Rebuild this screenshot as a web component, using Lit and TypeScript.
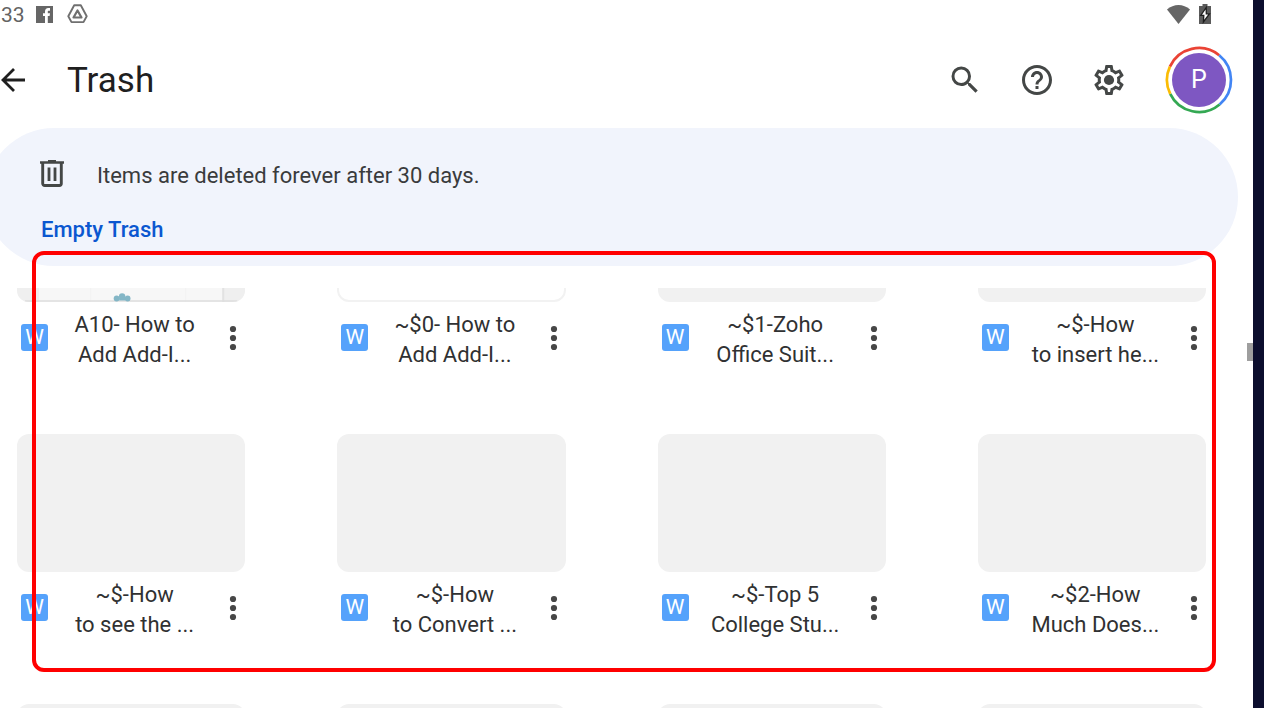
import { LitElement, html, css, svg } from "lit";
import { customElement, property } from "lit/decorators.js";

type Preview = "sheet" | "outline" | "plain";

interface TrashedFile {
  lines: string[];
  preview: Preview;
}

const FILES: TrashedFile[] = [
  { lines: ["A10- How to", "Add Add-I..."], preview: "sheet" },
  { lines: ["~$0- How to", "Add Add-I..."], preview: "outline" },
  { lines: ["~$1-Zoho", "Office Suit..."], preview: "plain" },
  { lines: ["~$-How", "to insert he..."], preview: "plain" },
  { lines: ["~$-How", "to see the ..."], preview: "plain" },
  { lines: ["~$-How", "to Convert ..."], preview: "plain" },
  { lines: ["~$-Top 5", "College Stu..."], preview: "plain" },
  { lines: ["~$2-How", "Much Does..."], preview: "plain" },
  { lines: [], preview: "plain" },
  { lines: [], preview: "plain" },
  { lines: [], preview: "plain" },
  { lines: [], preview: "plain" },
];

const SEARCH = svg`<path d="M15.5 14h-.79l-.28-.27A6.471 6.471 0 0 0 16 9.5 6.5 6.5 0 1 0 9.5 16c1.61 0 3.09-.59 4.23-1.57l.27.28v.79l5 4.99L20.49 19l-4.99-5zm-6 0C7.01 14 5 11.99 5 9.5S7.01 5 9.5 5 14 7.01 14 9.5 11.99 14 9.5 14z"/>`;
const HELP = svg`<path d="M11 18h2v-2h-2v2zm1-16C6.48 2 2 6.48 2 12s4.48 10 10 10 10-4.48 10-10S17.52 2 12 2zm0 18c-4.41 0-8-3.59-8-8s3.59-8 8-8 8 3.59 8 8-3.59 8-8 8zm0-14c-2.21 0-4 1.79-4 4h2c0-1.1.9-2 2-2s2 .9 2 2c0 2-3 1.75-3 5h2c0-2.25 3-2.5 3-5 0-2.21-1.79-4-4-4z"/>`;
const GEAR = svg`<path d="M19.43 12.98c.04-.32.07-.64.07-.98 0-.34-.03-.66-.07-.98l2.11-1.65c.19-.15.24-.42.12-.64l-2-3.46c-.09-.16-.26-.25-.44-.25-.06 0-.12.01-.17.03l-2.49 1c-.52-.4-1.08-.73-1.69-.98l-.38-2.65C14.46 2.18 14.25 2 14 2h-4c-.25 0-.46.18-.49.42l-.38 2.65c-.61.25-1.17.59-1.69.98l-2.49-1c-.06-.02-.12-.03-.18-.03-.17 0-.34.09-.43.25l-2 3.46c-.13.22-.07.49.12.64l2.11 1.65c-.04.32-.07.65-.07.98 0 .33.03.66.07.98l-2.11 1.65c-.19.15-.24.42-.12.64l2 3.46c.09.16.26.25.44.25.06 0 .12-.01.17-.03l2.49-1c.52.4 1.08.73 1.69.98l.38 2.65c.03.24.24.42.49.42h4c.25 0 .46-.18.49-.42l.38-2.65c.61-.25 1.17-.59 1.69-.98l2.49 1c.06.02.12.03.18.03.17 0 .34-.09.43-.25l2-3.46c.12-.22.07-.49-.12-.64l-2.11-1.65zm-1.98-1.71c.04.31.05.52.05.73 0 .21-.02.43-.05.73l-.14 1.13.89.7 1.08.84-.7 1.21-1.27-.51-1.04-.42-.9.68c-.43.32-.84.56-1.25.73l-1.06.43-.16 1.13-.2 1.35h-1.4l-.19-1.35-.16-1.13-1.06-.43c-.43-.18-.83-.41-1.23-.71l-.91-.7-1.06.43-1.27.51-.7-1.21 1.08-.84.89-.7-.14-1.13c-.03-.31-.05-.54-.05-.74s.02-.43.05-.73l.14-1.13-.89-.7-1.08-.84.7-1.21 1.27.51 1.04.42.9-.68c.43-.32.84-.56 1.25-.73l1.06-.43.16-1.13.2-1.35h1.39l.19 1.35.16 1.13 1.06.43c.43.18.83.41 1.23.71l.91.7 1.06-.43 1.27-.51.7 1.21-1.07.85-.89.7.14 1.13z"/><circle cx="12" cy="12" r="3.4"/>`;

@customElement("file-card")
class FileCard extends LitElement {
  @property({ attribute: false }) file!: TrashedFile;

  static styles = css`
    :host {
      display: block;
      min-width: 0;
    }
    .preview {
      height: 138px;
      border-radius: 12px;
      background: #f1f1f1;
      overflow: hidden;
      box-sizing: border-box;
    }
    .preview.outline {
      background: #fff;
      border: 2px solid #f2f2f2;
    }
    .preview svg {
      display: block;
      width: 100%;
      height: 100%;
    }
    .caption {
      display: flex;
      align-items: center;
      padding: 8px 0 0 4px;
      height: 60px;
    }
    .kind,
    .more {
      flex: none;
      margin-bottom: 5px;
    }
    .kind {
      width: 27px;
      height: 27px;
      border-radius: 3px;
      background: #55a2fb;
      color: #fff;
      font-size: 21px;
      line-height: 27px;
      text-align: center;
    }
    .name {
      flex: 1;
      text-align: center;
      font-size: 22px;
      line-height: 30px;
      color: #303132;
      white-space: nowrap;
    }
    .line {
      display: block;
    }
    .more {
      width: 24px;
      height: 36px;
      padding: 0;
      border: 0;
      background: none;
    }
    .more svg {
      display: block;
    }
  `;

  render() {
    const { lines, preview } = this.file;
    return html`
      <div class="preview ${preview}">${preview === "sheet" ? this.sheet() : ""}</div>
      ${lines.length
        ? html`<div class="caption">
            <span class="kind">W</span>
            <span class="name">${lines.map((l) => html`<span class="line">${l}</span>`)}</span>
            <button class="more" aria-label="More actions">
              <svg width="24" height="36" fill="#474747" aria-hidden="true">
                <circle cx="12" cy="9" r="3.1" />
                <circle cx="12" cy="18" r="3.1" />
                <circle cx="12" cy="27" r="3.1" />
              </svg>
            </button>
          </div>`
        : ""}
    `;
  }

  private sheet() {
    return html`<svg viewBox="0 0 228 138" preserveAspectRatio="none" aria-hidden="true">
      <rect width="228" height="138" fill="#efefef" />
      <rect x="22" width="184" height="138" fill="#f7f7f7" />
      <path d="M73.500 0v138M168.500 0v138" stroke="#f2f2f2" />
      <path d="M206 0v138" stroke="#e2e2e2" stroke-width="2" />
      <path d="M8 137h212" stroke="#dedede" stroke-width="1.500" />
      <g fill="#83b6c6">
        <circle cx="99.500" cy="134.500" r="2.900" />
        <circle cx="105" cy="132.500" r="3.200" />
        <circle cx="110.500" cy="134.500" r="2.900" />
        <rect x="102" y="134" width="6" height="2.500" />
      </g>
    </svg>`;
  }
}

@customElement("app-root")
class AppRoot extends LitElement {
  static styles = css`
    :host {
      display: block;
      font-family: Roboto, "Liberation Sans", sans-serif;
    }
    .frame {
      position: relative;
      display: flex;
      height: 100vh;
      overflow: hidden;
      background: #fff;
    }
    .edge {
      flex: none;
      width: 11px;
      background: #0c0e2e;
    }
    .app {
      position: relative;
      flex: 1;
      min-width: 0;
      display: flex;
      flex-direction: column;
      overflow: hidden;
    }
    .status {
      flex: none;
      display: flex;
      align-items: center;
      height: 28px;
      padding-right: 42px;
      padding-left: 1px;
      box-sizing: border-box;
      margin-bottom: 4px;
      color: #636363;
      font-size: 21px;
      line-height: 28px;
    }
    .status svg {
      flex: none;
    }
    .clock {
      margin: 2px 11px 0 0;
    }
    .fb {
      margin-right: 14px;
    }
    .wifi {
      margin-left: auto;
      margin-right: 9px;
    }
    .bar {
      flex: none;
      display: flex;
      align-items: center;
      height: 96px;
      padding-right: 20px;
    }
    button {
      padding: 0;
      border: 0;
      background: none;
      font-family: inherit;
    }
    button svg {
      display: block;
    }
    .title {
      flex: 1;
      margin: 0;
      padding: 2px 0 0 41px;
      font-size: 35px;
      line-height: 48px;
      font-weight: 400;
      color: #1f1f1f;
    }
    .action {
      width: 72px;
      height: 72px;
      display: grid;
      place-items: center;
    }
    .avatar {
      display: grid;
      place-items: center;
      width: 68px;
      height: 68px;
      margin-left: 20px;
    }
    .avatar svg,
    .letter {
      grid-area: 1 / 1;
    }
    .letter {
      color: #fff;
      font-size: 25px;
      line-height: 30px;
    }
    .banner {
      flex: none;
      display: flex;
      flex-direction: column;
      align-items: flex-start;
      gap: 24px;
      height: 138px;
      box-sizing: border-box;
      margin: 0 15px 22px -15px;
      padding: 33px 55px 0;
      border-radius: 69px;
      background: #f1f4fc;
    }
    .notice {
      display: flex;
      gap: 33px;
      margin: 0;
      font-size: 22px;
      line-height: 30px;
      color: #3a3b3c;
    }
    .bin {
      margin-top: -1px;
    }
    .empty {
      padding-left: 1px;
      font-size: 22px;
      line-height: 30px;
      font-weight: 500;
      color: #0b57d0;
    }
    .list {
      flex: 1;
      min-height: 0;
      overflow: hidden;
      padding: 0 47px 0 17px;
    }
    .grid {
      display: grid;
      grid-template-columns: repeat(4, minmax(0, 1fr));
      gap: 64px 92px;
      margin-top: -124px;
    }
    .thumb {
      position: absolute;
      right: 0;
      top: 343px;
      width: 6px;
      height: 18px;
      background: #9e9e9e;
    }
    .highlight {
      position: absolute;
      left: 32px;
      right: 48px;
      top: 251px;
      height: 421px;
      box-sizing: border-box;
      border: 4px solid #f00;
      border-radius: 12px;
      pointer-events: none;
    }
  `;

  private action(label: string, icon: unknown) {
    return html`<button class="action" aria-label=${label}>
      <svg width="36" height="36" viewBox="0 0 24 24" fill="#444746" aria-hidden="true">${icon}</svg>
    </button>`;
  }

  render() {
    return html`
      <div class="frame">
        <div class="app">
          <div class="status">
            <span class="clock">33</span>
            <svg class="fb" width="17" height="17" viewBox="0 0 17 17" aria-hidden="true">
              <rect width="17" height="17" fill="#666" />
              <path d="M9 17V10H7V7.300h2V5.500C9 3.300 10.300 2 12.300 2H14v2.700h-1.200c-.8 0-1 .4-1 1v1.600H14L13.600 10h-1.800v7z" fill="#fff" />
            </svg>
            <svg width="21" height="20" viewBox="0 0 21 20" fill="none" stroke="#707070" aria-hidden="true">
              <path d="M7.200 1.300h6.600l5.900 10.900-3.200 5.900H4.500L1.300 12.200z" stroke-width="1.900" stroke-linejoin="round" />
              <path d="M10.500 6.500l4 7h-8z" stroke-width="2.200" stroke-linejoin="round" />
            </svg>
            <svg class="wifi" width="23" height="19" viewBox="0 0 23 19" aria-hidden="true">
              <path d="M0 4.500C6.500-1.500 16.500-1.500 23 4.500L11.500 19z" fill="#666" />
            </svg>
            <svg width="12" height="20" viewBox="0 0 12 20" aria-hidden="true">
              <path d="M3.500 0h5v2H12v18H0V2h3.500z" fill="#5a5a5a" />
              <path d="M7.200 3.500L1.800 11.300h3L4.400 18l6-8.200H7.300z" fill="#fff" stroke="#1d1d1d" stroke-width="1.300" />
            </svg>
          </div>
          <header class="bar">
            <button aria-label="Back">
              <svg width="26" height="26" viewBox="0 0 26 26" fill="none" stroke="#1f1f1f" stroke-width="2.800" aria-hidden="true">
                <path d="M25 13H3.500M14 2L3 13l11 11" />
              </svg>
            </button>
            <h1 class="title">Trash</h1>
            ${this.action("Search", SEARCH)} ${this.action("Help", HELP)} ${this.action("Settings", GEAR)}
            <button class="avatar" aria-label="Account P">
              <svg width="68" height="68" fill="none" stroke-width="2.700" aria-hidden="true">
                <circle cx="34" cy="34" r="27" fill="#7e57c2" />
                <path d="M4.900 20.600A32 32 0 0 1 54.200 9.200" stroke="#ea4335" />
                <path d="M54.200 9.200A32 32 0 0 1 54.600 58.500" stroke="#4285f4" />
                <path d="M54.600 58.500A32 32 0 0 1 5.200 47.900" stroke="#34a853" />
                <path d="M5.200 47.900A32 32 0 0 1 4.900 20.600" stroke="#fbbc04" />
              </svg>
              <span class="letter">P</span>
            </button>
          </header>
          <section class="banner">
            <p class="notice">
              <svg class="bin" width="24" height="28" viewBox="0 0 24 28" fill="none" stroke="#444746" aria-hidden="true">
                <path d="M0 2.500h24M8 1h8" stroke-width="2.600" />
                <path d="M2.700 3v20.500a2 2 0 0 0 2 2h14.600a2 2 0 0 0 2-2V3" stroke-width="2.900" />
                <path d="M9 7.500v13.500M15 7.500v13.500" stroke-width="2.800" />
              </svg>
              Items are deleted forever after 30 days.
            </p>
            <button class="empty">Empty Trash</button>
          </section>
          <main class="list">
            <div class="grid">${FILES.map((f) => html`<file-card .file=${f}></file-card>`)}</div>
          </main>
          <div class="thumb"></div>
        </div>
        <div class="edge"></div>
        <div class="highlight"></div>
      </div>
    `;
  }
}
